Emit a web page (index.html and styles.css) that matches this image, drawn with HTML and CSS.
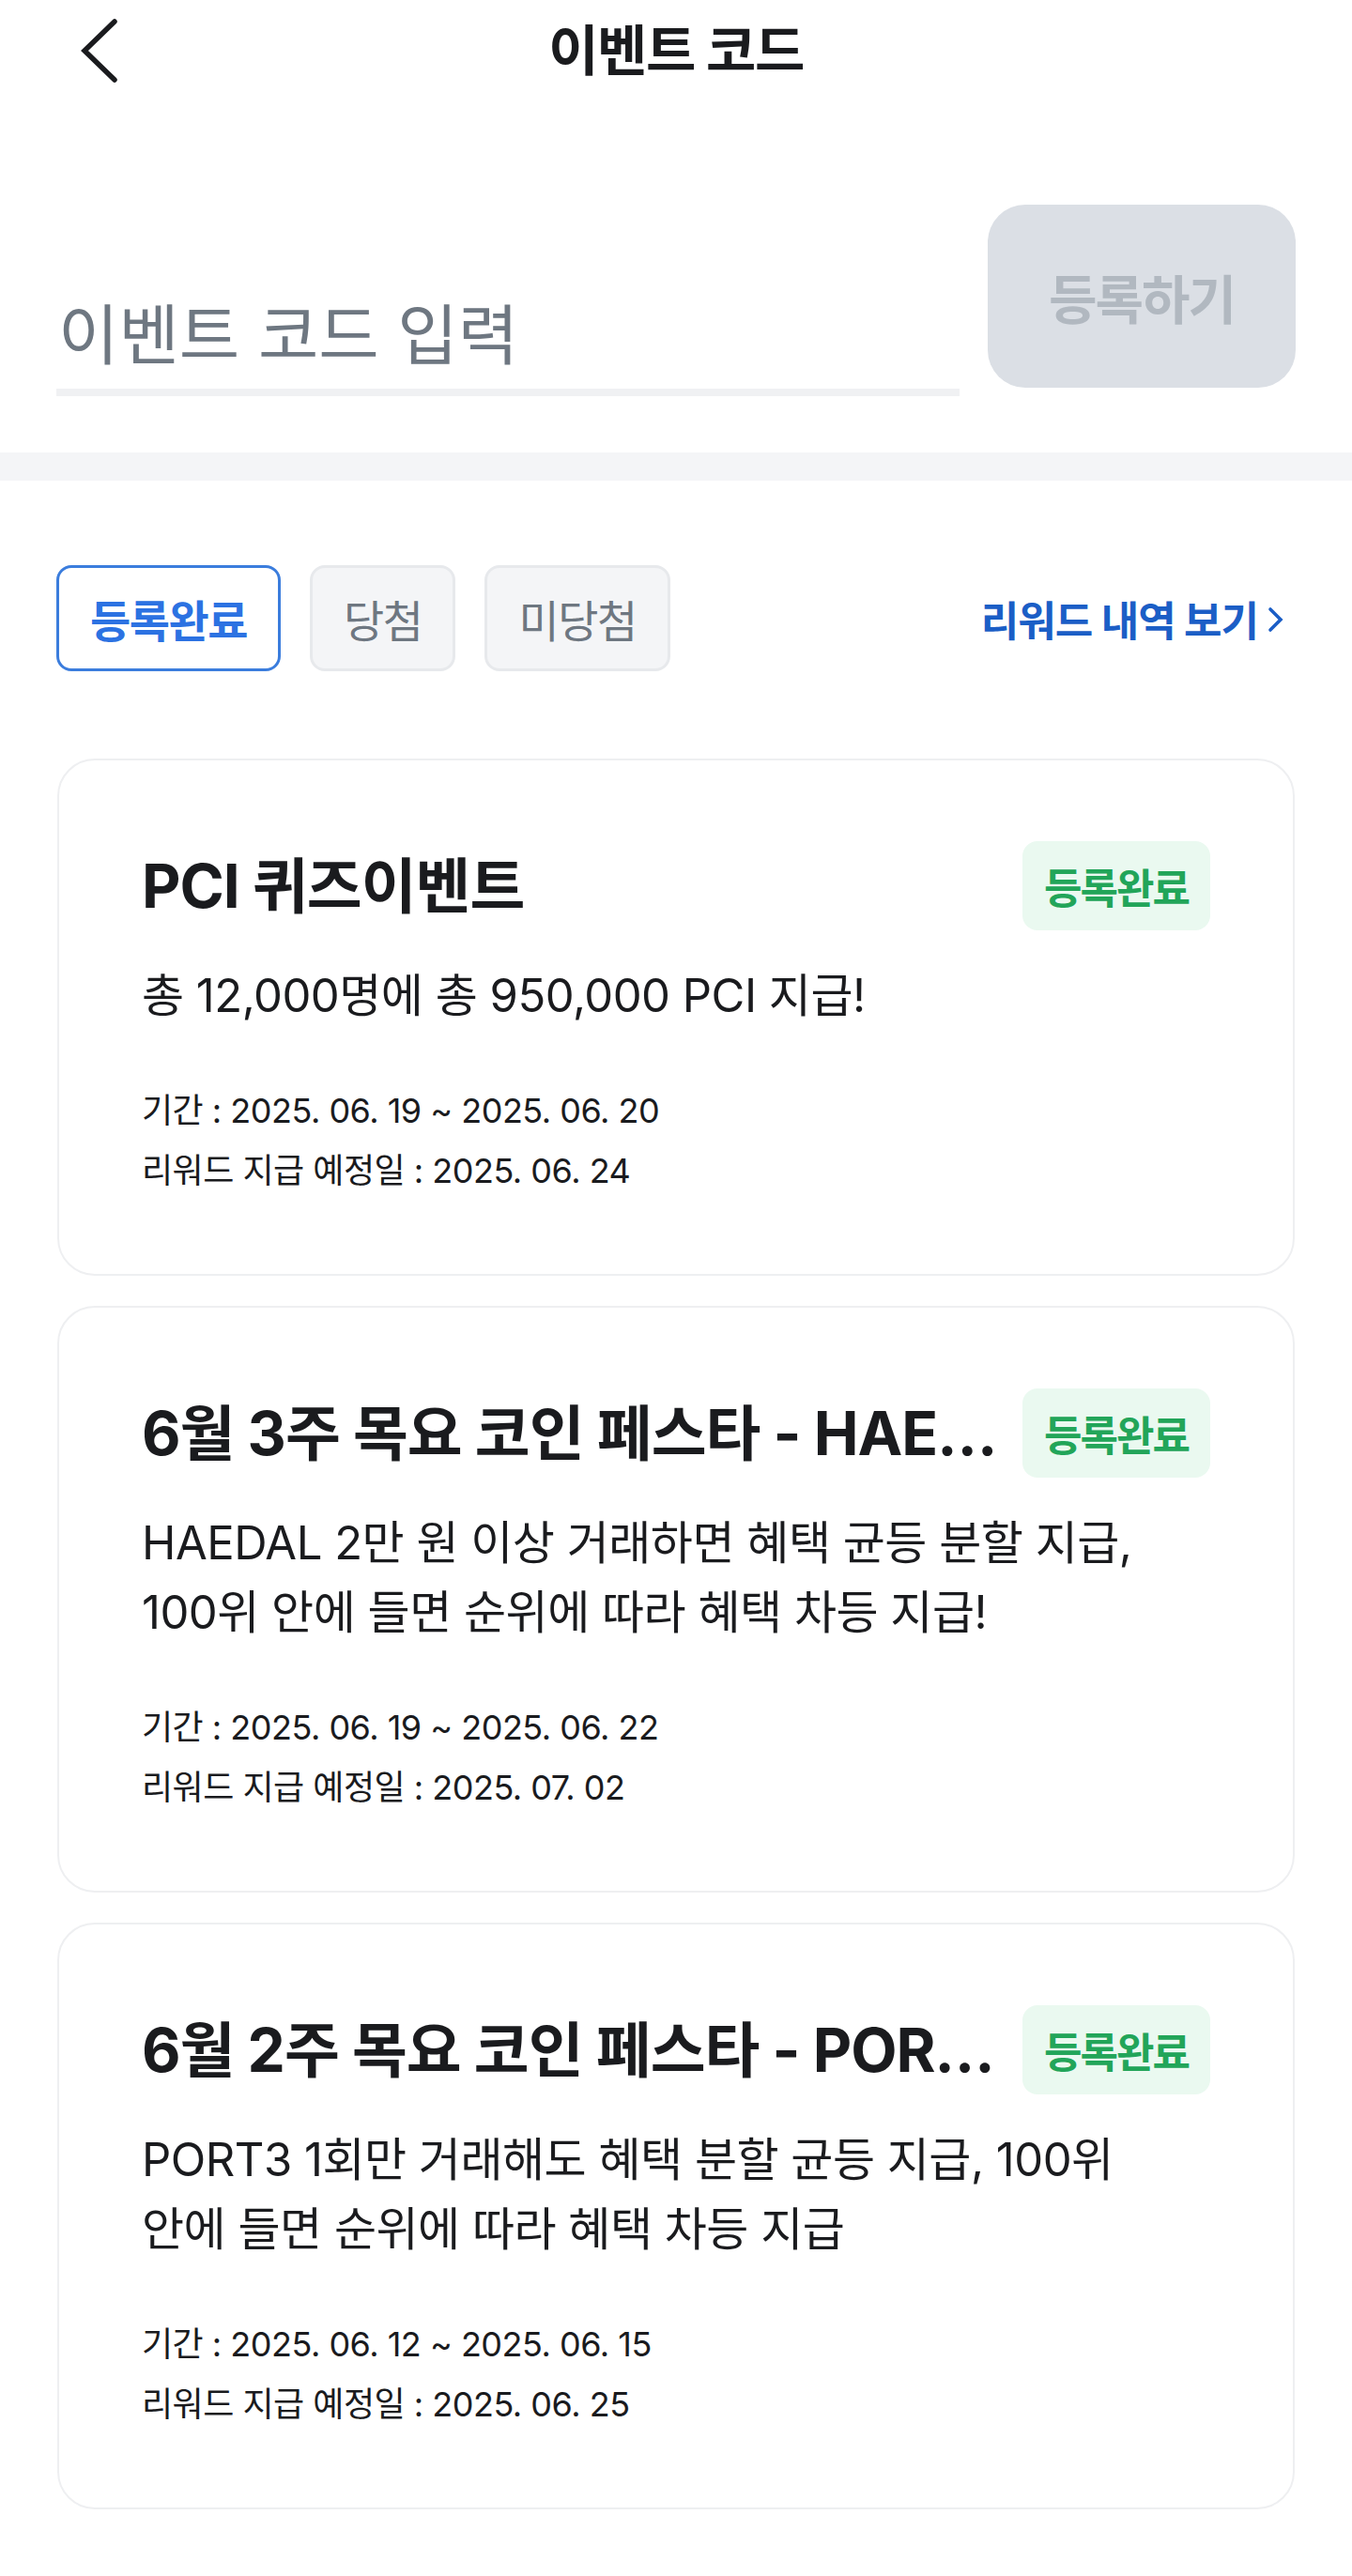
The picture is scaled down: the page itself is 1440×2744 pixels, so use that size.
FILE: index.html
```html
<!DOCTYPE html>
<html lang="ko">
<head>
<meta charset="utf-8">
<title>이벤트 코드</title>
<link rel="stylesheet" href="styles.css">
</head>
<body>
<div class="page">
  <header class="topbar">
    <button class="back" aria-label="뒤로">
      <svg width="44" height="72" viewBox="0 0 44 72" fill="none">
        <path d="M37 5 L5 36 L37 67" stroke="#1a1b1e" stroke-width="5.5" stroke-linecap="round" stroke-linejoin="miter"/>
      </svg>
    </button>
    <h1 class="topbar-title">이벤트 코드</h1>
    <span class="topbar-spacer"></span>
  </header>

  <section class="code-form">
    <input class="code-input" type="text" placeholder="이벤트 코드 입력">
    <button class="submit-btn">등록하기</button>
  </section>

  <div class="divider-band"></div>

  <section class="filters">
    <div class="tabs">
      <button class="tab tab-active">등록완료</button>
      <button class="tab">당첨</button>
      <button class="tab">미당첨</button>
    </div>
    <a class="reward-link">리워드 내역 보기
      <svg class="link-chev" width="22" height="28" viewBox="0 0 22 28" fill="none">
        <path d="M5 3 L16 14 L5 25" stroke="#1b5ec6" stroke-width="3.6" stroke-linecap="round"/>
      </svg>
    </a>
  </section>

  <section class="cards">
    <article class="card">
      <div class="card-head">
        <h2 class="card-title">PCI 퀴즈이벤트</h2>
        <span class="badge">등록완료</span>
      </div>
      <p class="card-desc">총 12,000명에 총 950,000 PCI 지급!</p>
      <div class="card-meta">
        <p>기간 : 2025. 06. 19 ~ 2025. 06. 20</p>
        <p>리워드 지급 예정일 : 2025. 06. 24</p>
      </div>
    </article>

    <article class="card">
      <div class="card-head">
        <h2 class="card-title">6월 3주 목요 코인 페스타 - HAEDAL</h2>
        <span class="badge">등록완료</span>
      </div>
      <p class="card-desc">HAEDAL 2만 원 이상 거래하면 혜택 균등 분할 지급,<br>100위 안에 들면 순위에 따라 혜택 차등 지급!</p>
      <div class="card-meta">
        <p>기간 : 2025. 06. 19 ~ 2025. 06. 22</p>
        <p>리워드 지급 예정일 : 2025. 07. 02</p>
      </div>
    </article>

    <article class="card">
      <div class="card-head">
        <h2 class="card-title">6월 2주 목요 코인 페스타 - PORT3</h2>
        <span class="badge">등록완료</span>
      </div>
      <p class="card-desc">PORT3 1회만 거래해도 혜택 분할 균등 지급, 100위<br>안에 들면 순위에 따라 혜택 차등 지급</p>
      <div class="card-meta">
        <p>기간 : 2025. 06. 12 ~ 2025. 06. 15</p>
        <p>리워드 지급 예정일 : 2025. 06. 25</p>
      </div>
    </article>
  </section>
</div>
</body>
</html>
```

FILE: styles.css
```css
* { box-sizing: border-box; }

html, body {
  margin: 0;
  padding: 0;
  background: #ffffff;
}

body {
  font-family: Inter, "Noto Sans CJK KR", "Noto Sans", sans-serif;
  color: #1a1b1e;
}

.page {
  width: 1440px;
}

/* top bar */
.topbar {
  height: 108px;
  display: grid;
  grid-template-columns: 1fr auto 1fr;
  align-items: center;
}

.back {
  justify-self: start;
  margin-left: 85px;
  background: none;
  border: 0;
  padding: 0;
  display: flex;
  cursor: pointer;
}

.topbar-title {
  margin: 0;
  font-size: 58px;
  font-weight: 700;
  letter-spacing: -1.5px;
  line-height: 1;
}

/* code form */
.code-form {
  display: flex;
  align-items: flex-end;
  gap: 30px;
  padding: 110px 60px 60px;
}

.code-input {
  flex: 1;
  min-width: 0;
  height: 122px;
  border: 0;
  border-bottom: 8px solid #f0f1f3;
  padding: 0 0 0 2px;
  outline: none;
  background: transparent;
  font-family: inherit;
  font-size: 70px;
  color: #1a1b1e;
}

.code-input::placeholder {
  color: #6e7781;
  letter-spacing: 0;
}

.submit-btn {
  width: 328px;
  height: 195px;
  margin-bottom: 9px;
  border: 0;
  border-radius: 40px;
  background: #dbdfe5;
  color: #b1b8c0;
  font-family: inherit;
  font-size: 56px;
  font-weight: 700;
  letter-spacing: -2px;
  flex-shrink: 0;
}

.divider-band {
  height: 30px;
  background: #f4f5f7;
}

/* filters */
.filters {
  display: flex;
  align-items: center;
  justify-content: space-between;
  padding: 90px 70px 0 60px;
}

.tabs {
  display: flex;
  gap: 31px;
}

.tab {
  height: 113px;
  padding: 0 33px;
  border-radius: 16px;
  border: 3px solid #e7e9ec;
  background: #f4f5f7;
  color: #6e7781;
  font-family: inherit;
  font-size: 47px;
  font-weight: 400;
  letter-spacing: -1.5px;
}

.tab-active {
  border-color: #3b7ddd;
  background: #ffffff;
  color: #2c72e2;
  font-weight: 700;
}

.reward-link {
  display: flex;
  align-items: center;
  gap: 8px;
  color: #1b5ec6;
  font-size: 44px;
  font-weight: 700;
  letter-spacing: -1px;
}

.link-chev {
  margin-top: 2px;
}

/* cards */
.cards {
  display: flex;
  flex-direction: column;
  gap: 32px;
  padding: 93px 61px 76px;
}

.card {
  border: 2px solid #eeeff1;
  border-radius: 40px;
  padding: 86px 88px 78px;
}

.card-head {
  display: flex;
  align-items: center;
  gap: 26px;
}

.card-title {
  flex: 1;
  min-width: 0;
  margin: 0;
  font-size: 64px;
  font-weight: 700;
  line-height: 80px;
  letter-spacing: -1px;
  white-space: nowrap;
  overflow: hidden;
  text-overflow: ellipsis;
}

.badge {
  flex-shrink: 0;
  width: 200px;
  height: 95px;
  border-radius: 16px;
  background: #eaf9f0;
  color: #22a559;
  font-size: 44px;
  font-weight: 700;
  letter-spacing: -2px;
  display: flex;
  align-items: center;
  justify-content: center;
}

.card-desc {
  margin: 33px 0 0;
  font-size: 49px;
  line-height: 74px;
  letter-spacing: -0.5px;
}

.card-meta {
  margin-top: 53px;
}

.card-meta p {
  margin: 0;
  font-size: 36px;
  line-height: 64px;
  letter-spacing: -0.5px;
}
```
